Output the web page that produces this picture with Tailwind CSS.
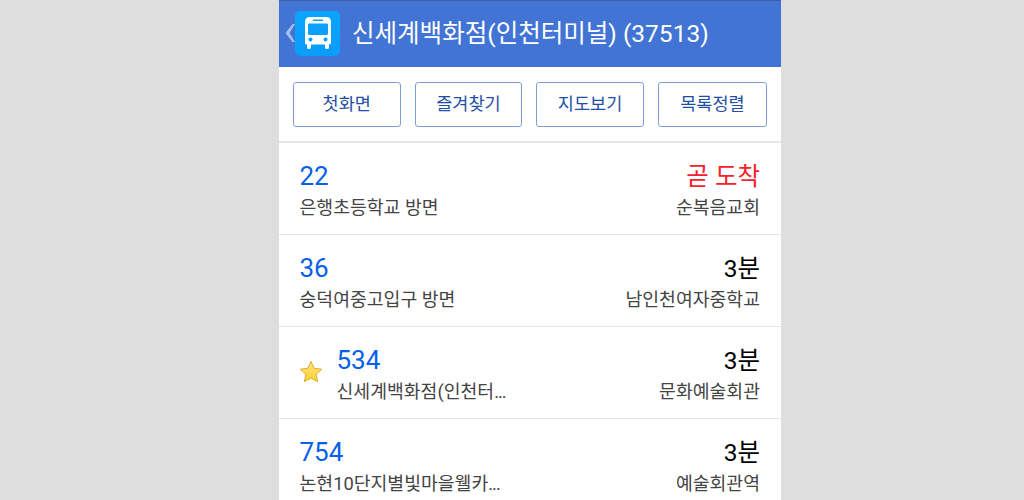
<!DOCTYPE html>
<html lang="ko">
<head>
<meta charset="utf-8">
<title>신세계백화점(인천터미널)</title>
<script src="https://cdn.jsdelivr.net/npm/@tailwindcss/browser@4"></script>
</head>
<body class="bg-[#dedede] font-['Roboto','Noto_Sans_CJK_KR',sans-serif]">
<div class="ml-[279px] h-[500px] w-[502px] overflow-hidden bg-white">
  <!-- header -->
  <div class="flex h-[67px] items-center border-t border-[#3a5f9f] bg-[#4174d4] pb-[2px]">
    <svg class="ml-[5px] h-[20px] w-[11px]" viewBox="0 0 11 20"><path d="M8.500 1 L1.500 10 L8.500 19 L11 19 L5.500 10 L11 1 Z" fill="#a9c0ec"/></svg>
    <div class="flex h-[45px] w-[45px] items-center justify-center rounded-[5px] bg-gradient-to-b from-[#0aa5fb] to-[#0a9cfa]">
      <svg class="h-[34px] w-[28px]" viewBox="0 0 28 34">
        <path fill="#fff" fill-rule="evenodd" d="M6 1 H22 Q27 1 27 6 V27 Q27 28.500 25 28.500 V31.500 Q25 33 23 33 Q21 33 21 31.500 V28.500 H7 V31.500 Q7 33 5 33 Q3 33 3 31.500 V28.500 Q1 28.500 1 27 V6 Q1 1 6 1 Z M9 3.500 V5 H19 V3.500 Z M5 7.500 Q4 7.500 4 9 V17.500 Q4 19 5.500 19 H22.500 Q24 19 24 17.500 V9 Q24 7.500 23 7.500 Z"/>
        <circle cx="6.500" cy="23.500" r="2" fill="#0a9cfa"/><circle cx="21.500" cy="23.500" r="2" fill="#0a9cfa"/>
      </svg>
    </div>
    <h1 class="ml-[12px] mt-[2px] whitespace-nowrap text-[24.500px] leading-none text-white">신세계백화점(인천터미널) (37513)</h1>
  </div>
  <!-- toolbar -->
  <div class="flex h-[76px] items-center justify-between border-b-2 border-[#e6e6e6] pl-[14px] pr-[14px] text-[17.500px] text-[#1f4fa3]">
    <button class="h-[45px] w-[107.500px] rounded-[3px] border border-[#7f9fd6] bg-white">첫화면</button>
    <button class="h-[45px] w-[107.500px] rounded-[3px] border border-[#7f9fd6] bg-white">즐겨찾기</button>
    <button class="h-[45px] w-[107.500px] rounded-[3px] border border-[#7f9fd6] bg-white">지도보기</button>
    <button class="h-[45px] w-[109px] rounded-[3px] border border-[#7f9fd6] bg-white">목록정렬</button>
  </div>
  <!-- bus list -->
  <div class="flex h-[92px] items-center justify-between border-b border-[#e4e4e4] pl-[20.500px] pr-[21px] pt-[4px]">
    <div>
      <div class="text-[26px] leading-[32px] text-[#0760ea]">22</div>
      <div class="mt-[3px] text-[18.300px] leading-[26px] text-[#444]">은행초등학교 방면</div>
    </div>
    <div class="text-right">
      <div class="text-[24.500px] leading-[34px] text-[#f5222d]">곧 도착</div>
      <div class="mt-[1px] text-[18.300px] leading-[26px] text-[#444]">순복음교회</div>
    </div>
  </div>
  <div class="flex h-[92px] items-center justify-between border-b border-[#e4e4e4] pl-[20.500px] pr-[21px] pt-[4px]">
    <div>
      <div class="text-[26px] leading-[32px] text-[#0760ea]">36</div>
      <div class="mt-[3px] text-[18.300px] leading-[26px] text-[#444]">숭덕여중고입구 방면</div>
    </div>
    <div class="text-right">
      <div class="text-[24.500px] leading-[34px] text-black">3분</div>
      <div class="mt-[1px] text-[18.300px] leading-[26px] text-[#444]">남인천여자중학교</div>
    </div>
  </div>
  <div class="flex h-[92px] items-center justify-between border-b border-[#e4e4e4] pl-[20.500px] pr-[21px] pt-[4px]">
    <div class="flex items-center">
      <svg class="h-[24px] w-[24px] -translate-x-[1px] -translate-y-[3px]" viewBox="0 0 24 24">
        <defs><linearGradient id="star" x1="0" y1="0" x2="0" y2="1"><stop offset="0" stop-color="#ffe680"/><stop offset="1" stop-color="#fcd02f"/></linearGradient></defs>
        <path d="M12 1.500 L15.200 8.300 L22.700 9.200 L17.200 14.300 L18.600 21.700 L12 18 L5.400 21.700 L6.800 14.300 L1.300 9.200 L8.800 8.300 Z" fill="url(#star)" stroke="#e0a92e" stroke-width="1" stroke-linejoin="round"/>
      </svg>
      <div class="ml-[13px]">
        <div class="text-[26px] leading-[32px] text-[#0760ea]">534</div>
        <div class="mt-[3px] text-[18.300px] leading-[26px] text-[#444]">신세계백화점(인천터<span class="tracking-[-1px]">...</span></div>
      </div>
    </div>
    <div class="text-right">
      <div class="text-[24.500px] leading-[34px] text-black">3분</div>
      <div class="mt-[1px] text-[18.300px] leading-[26px] text-[#444]">문화예술회관</div>
    </div>
  </div>
  <div class="flex h-[91px] items-center justify-between pl-[20.500px] pr-[21px] pt-[4px]">
    <div>
      <div class="text-[26px] leading-[32px] text-[#0760ea]">754</div>
      <div class="mt-[3px] text-[18.300px] leading-[26px] text-[#444]">논현10단지별빛마을웰카<span class="tracking-[-1px]">...</span></div>
    </div>
    <div class="text-right">
      <div class="text-[24.500px] leading-[34px] text-black">3분</div>
      <div class="mt-[1px] text-[18.300px] leading-[26px] text-[#444]">예술회관역</div>
    </div>
  </div>
</div>
</body>
</html>
